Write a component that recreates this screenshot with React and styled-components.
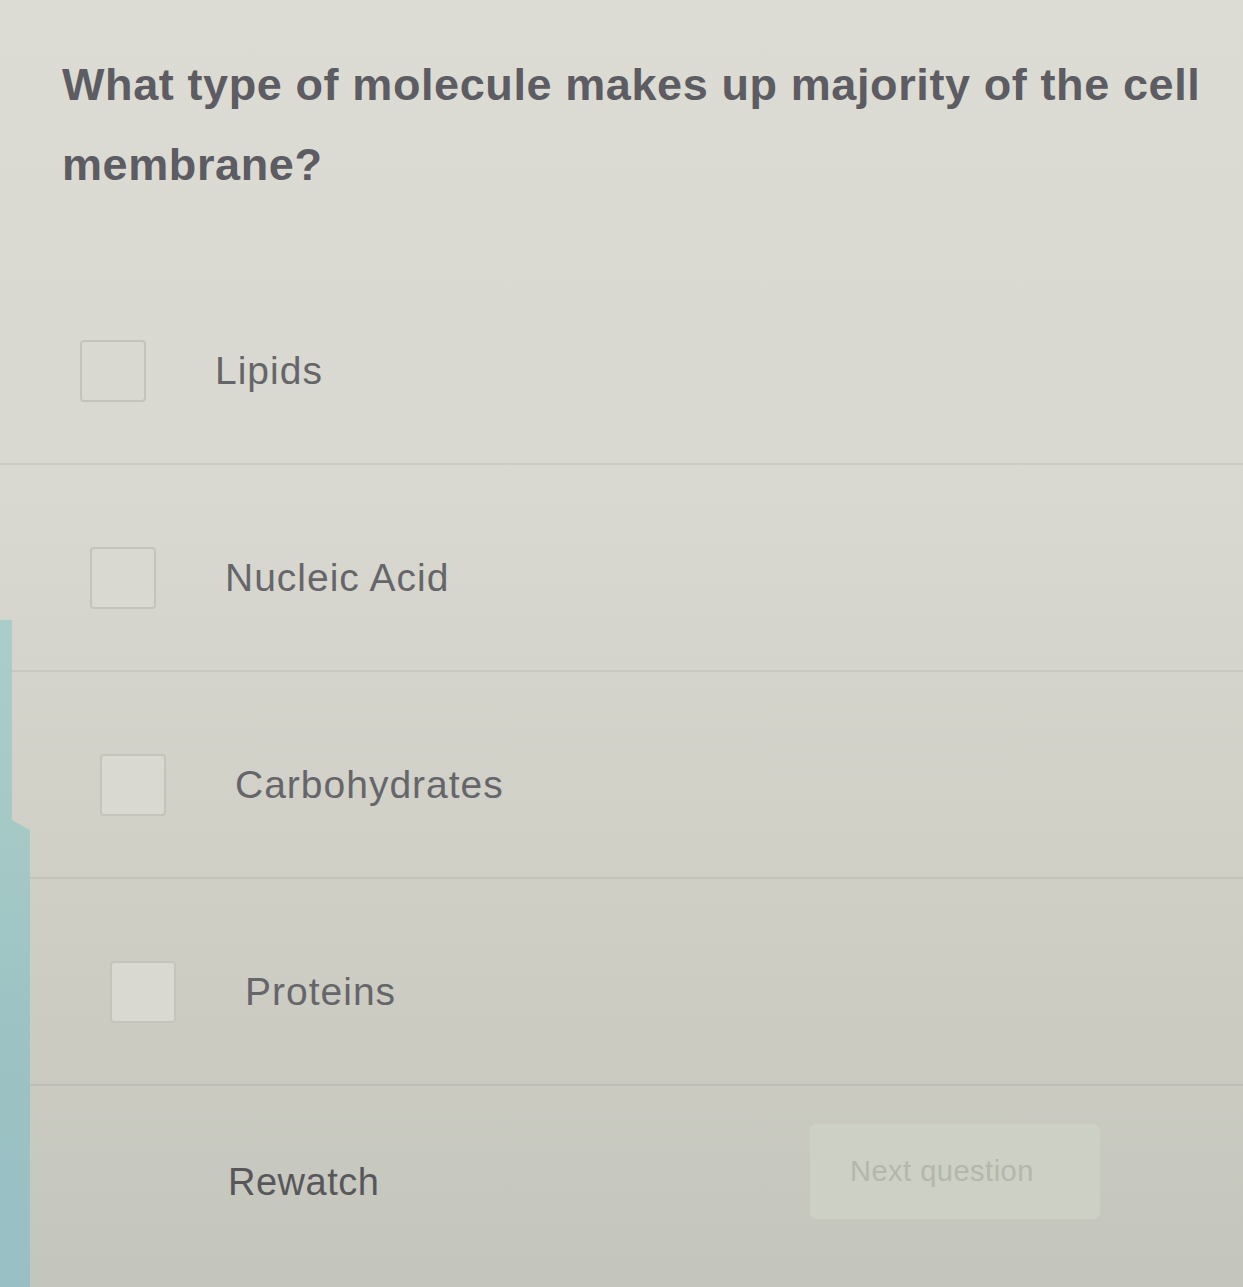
import React from "react";
import styled, { createGlobalStyle } from "styled-components";

const Global = createGlobalStyle`
  html, body { margin: 0; padding: 0; }
  body {
    width: 1243px;
    height: 1287px;
    overflow: hidden;
    background: linear-gradient(180deg, #dcdcd5 0%, #d8d8d0 40%, #cdcdc4 75%, #c4c5bc 100%);
    font-family: "Liberation Sans", Arial, sans-serif;
  }
`;

const Page = styled.div`
  display: flex;
  width: 1243px;
  height: 1287px;
`;

const Edge = styled.div`
  flex: 0 0 30px;
  background: linear-gradient(
    180deg,
    transparent 0px,
    transparent 620px,
    #a9cdc8 620px,
    #a5cac6 820px,
    #9dc3c4 1000px,
    #98bfc2 1287px
  );
  clip-path: polygon(0 0, 40% 0, 40% 820px, 100% 830px, 100% 100%, 0 100%);
`;

const Main = styled.div`
  flex: 1;
  display: flex;
  flex-direction: column;
  margin-left: -30px;
`;

const Question = styled.h1`
  margin: 0;
  padding: 45px 0 0 62px;
  font-size: 45px;
  line-height: 80px;
  font-weight: 700;
  color: #5c5c62;
  letter-spacing: 0.6px;
`;

const Options = styled.div`
  margin-top: 53px;
  display: flex;
  flex-direction: column;
`;

const Row = styled.label`
  display: flex;
  align-items: center;
  height: 207px;
  box-sizing: border-box;
  padding: 20px 0 0 ${(p) => p.$indent}px;
  border-bottom: 2px solid rgba(0, 0, 0, 0.055);
  cursor: pointer;
`;

const Box = styled.span`
  flex: 0 0 auto;
  width: 66px;
  height: 62px;
  box-sizing: border-box;
  border: 2px solid #c4c4bb;
  border-radius: 4px;
  background: #d9d9d1;
  margin-right: 69px;
`;

const OptionText = styled.span`
  font-size: 39px;
  color: #66666a;
  letter-spacing: 1px;
`;

const Footer = styled.div`
  display: grid;
  grid-template-columns: 582px 290px;
  align-items: center;
  padding: 38px 0 0 228px;
`;

const Rewatch = styled.span`
  font-size: 38px;
  color: #57575b;
  letter-spacing: 0.5px;
  padding-top: 22px;
`;

const NextButton = styled.button`
  height: 95px;
  border: none;
  border-radius: 6px;
  background: #cdd0c4;
  color: #b3b7ac;
  font-family: "Liberation Sans", Arial, sans-serif;
  font-size: 29px;
  letter-spacing: 0.5px;
  text-align: left;
  padding: 0 0 0 40px;
`;

const options = [
  { label: "Lipids", indent: 80 },
  { label: "Nucleic Acid", indent: 90 },
  { label: "Carbohydrates", indent: 100 },
  { label: "Proteins", indent: 110 },
];

export default function App() {
  return (
    <>
      <Global />
      <Page>
        <Edge />
        <Main>
          <Question>
            What type of molecule makes up majority of the cell membrane?
          </Question>
          <Options>
            {options.map((o) => (
              <Row key={o.label} $indent={o.indent}>
                <Box />
                <OptionText>{o.label}</OptionText>
              </Row>
            ))}
          </Options>
          <Footer>
            <Rewatch>Rewatch</Rewatch>
            <NextButton>Next question</NextButton>
          </Footer>
        </Main>
      </Page>
    </>
  );
}
